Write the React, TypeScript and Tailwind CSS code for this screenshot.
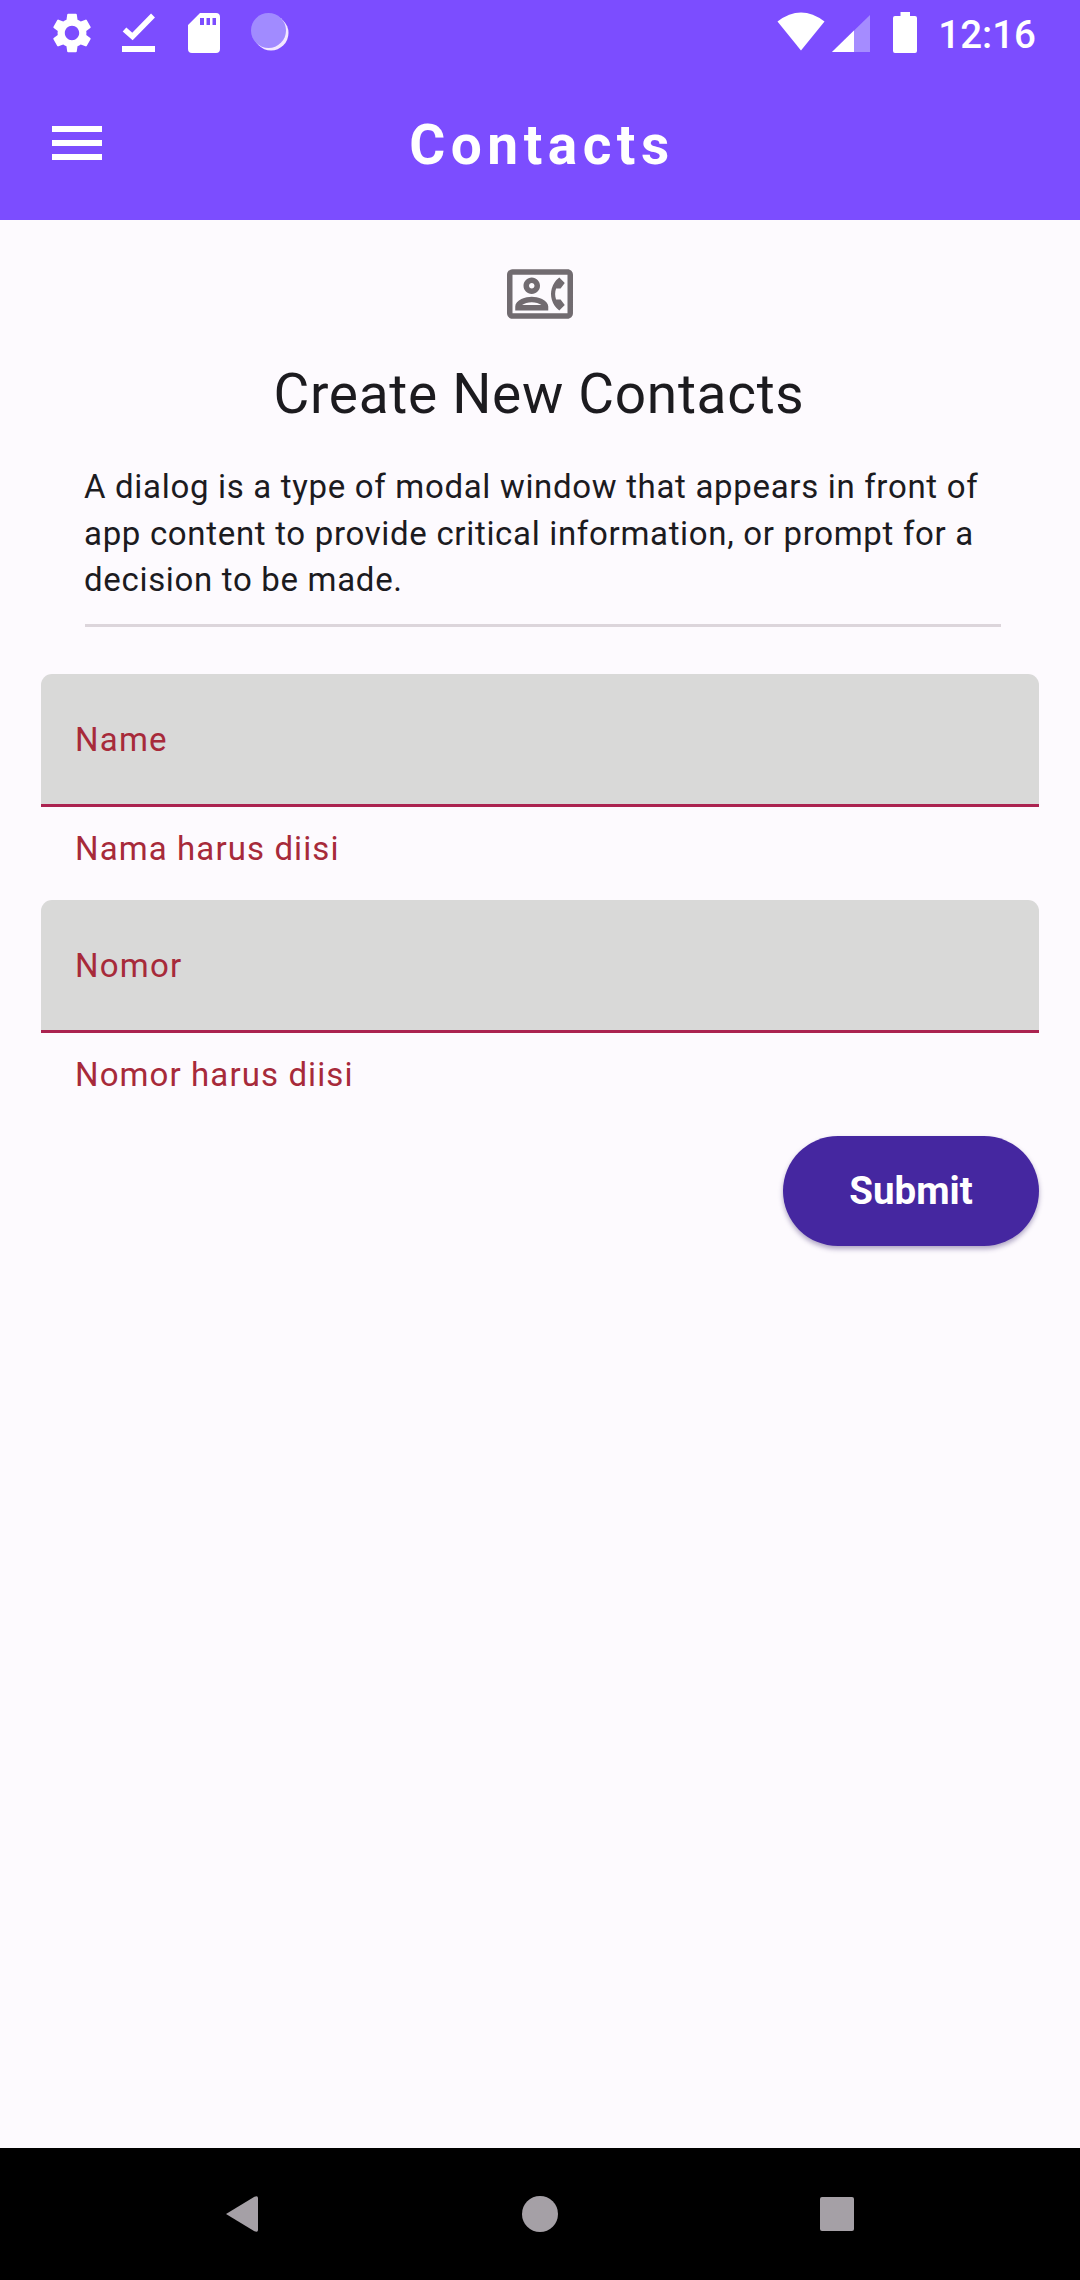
import { MdOutlineContactPhone, MdSettings } from "react-icons/md";

function StatusBar() {
  return (
    <div className="flex h-[66px] items-start justify-between text-white">
      <div className="flex items-start pl-[48px] pt-[9px]">
        <MdSettings className="size-12" />
        <svg className="ml-[26px] mt-[4px] h-[40px] w-[34px]" viewBox="0 0 34 40" fill="none">
          <path d="M2.5 16.5L10.5 23.5L31 2.5" stroke="currentColor" strokeWidth="5.5" />
          <rect x="0" y="33" width="33" height="6" fill="currentColor" />
        </svg>
        <svg className="ml-[32px] mt-[4px] h-[40px] w-[32px]" viewBox="0 0 32 40">
          <path
            fillRule="evenodd"
            fill="currentColor"
            d="M12 0H28Q32 0 32 4V36Q32 40 28 40H4Q0 40 0 36V12ZM12 5V12H16V5ZM18.500 5V12H22V5ZM24.500 5V12H28V5Z"
          />
        </svg>
        <svg className="ml-[31px] mt-[3px] h-[40px] w-[38px]" viewBox="0 0 38 40">
          <circle cx="20" cy="21" r="17.500" fill="#f3e8ff" />
          <circle cx="17.500" cy="18.500" r="17.500" fill="#a18bff" />
        </svg>
      </div>
      <div className="flex items-start pr-[44px]">
        <svg className="mt-[12px] h-[39px] w-[48px]" viewBox="0 0 50 39" preserveAspectRatio="none">
          <path d="M0.500 9.500Q25 -8.500 49.500 9.500L25 38.500Z" fill="currentColor" />
        </svg>
        <svg className="ml-[7px] mt-[15px] h-[37px] w-[38px]" viewBox="0 0 38 37">
          <path d="M38 0V37H0Z" fill="#a58cff" />
          <path d="M22 15.500V37H0Z" fill="currentColor" />
        </svg>
        <svg className="ml-[23px] mt-[12px] h-[41px] w-[24px]" viewBox="0 0 24 41">
          <path
            d="M7.500 0H17V4H22Q24 4 24 6V39Q24 41 22 41H2Q0 41 0 39V6Q0 4 2 4H7.500Z"
            fill="currentColor"
          />
        </svg>
        <span className="ml-[21px] mt-[11px] text-[38.5px] leading-[48px] font-medium">12:16</span>
      </div>
    </div>
  );
}

function AppBar() {
  return (
    <div className="grid h-[154px] grid-cols-[160px_1fr_160px] items-center text-white">
      <button className="ml-[52px] flex w-[50px] flex-col gap-[8px]" aria-label="Menu">
        <span className="h-[6px] w-full bg-white" />
        <span className="h-[6px] w-full bg-white" />
        <span className="h-[6px] w-full bg-white" />
      </button>
      <h1 className="pt-[3px] pl-[4px] text-center text-[55px] leading-[64px] font-bold tracking-[5.5px]">Contacts</h1>
    </div>
  );
}

function Field({ label, error }: { label: string; error: string }) {
  return (
    <div className="text-[33px] leading-[40px] text-[#a72a3a]">
      <div className="h-[133px] rounded-t-[11px] border-b-[3px] border-[#ab2350] bg-[#d9d9d8] px-[34px] pt-[46px] tracking-[1.2px]">
        {label}
      </div>
      <div className="px-[34px] pt-[22px] tracking-[1.1px]">{error}</div>
    </div>
  );
}

export default function App() {
  return (
    <div className="flex h-[2280px] w-[1080px] flex-col bg-[#fdfafe] font-[Roboto,sans-serif]">
      <header className="h-[220px] shrink-0 bg-[#7c4dff]">
        <StatusBar />
        <AppBar />
      </header>
      <main className="flex flex-1 flex-col px-[41px] pt-[41px]">
        <MdOutlineContactPhone className="size-[66px] self-center text-[#716b70]" />
        <h2 className="mt-[28px] pr-[2px] text-center text-[55px] leading-[78px] tracking-[0.69px] text-[#1c1b1f]">
          Create New Contacts
        </h2>
        <p className="mt-[31px] px-[43px] text-[33px] leading-[46.5px] tracking-[0.68px] text-[#1c1b1f]">
          A dialog is a type of modal window that appears in front of
          <br />
          app content to provide critical information, or prompt for a
          <br />
          decision to be made.
        </p>
        <div className="mr-[38px] ml-[44px] mt-[20px] h-[3px] bg-[#dcd5db]" />
        <div className="mt-[47px] h-[226px]">
          <Field label="Name" error="Nama harus diisi" />
        </div>
        <div className="h-[236px]">
          <Field label="Nomor" error="Nomor harus diisi" />
        </div>
        <button className="h-[110px] w-[256px] self-end rounded-full bg-[#4527a0] pt-px text-[38.5px] font-bold text-white shadow-[0_3px_5px_rgba(60,40,110,0.4)]">
          Submit
        </button>
      </main>
      <nav className="flex h-[132px] shrink-0 bg-black pt-[48px] text-[#a5a0a6]">
        <svg className="ml-[226px] h-[36px] w-[32px]" viewBox="0 0 32 36">
          <path d="M0 18L28 1Q32 -1 32 2V34Q32 37 28 35Z" fill="currentColor" />
        </svg>
        <span className="ml-[264px] size-[36px] rounded-full bg-current" />
        <span className="mt-px ml-[262px] size-[34px] rounded-[2px] bg-current" />
      </nav>
    </div>
  );
}
